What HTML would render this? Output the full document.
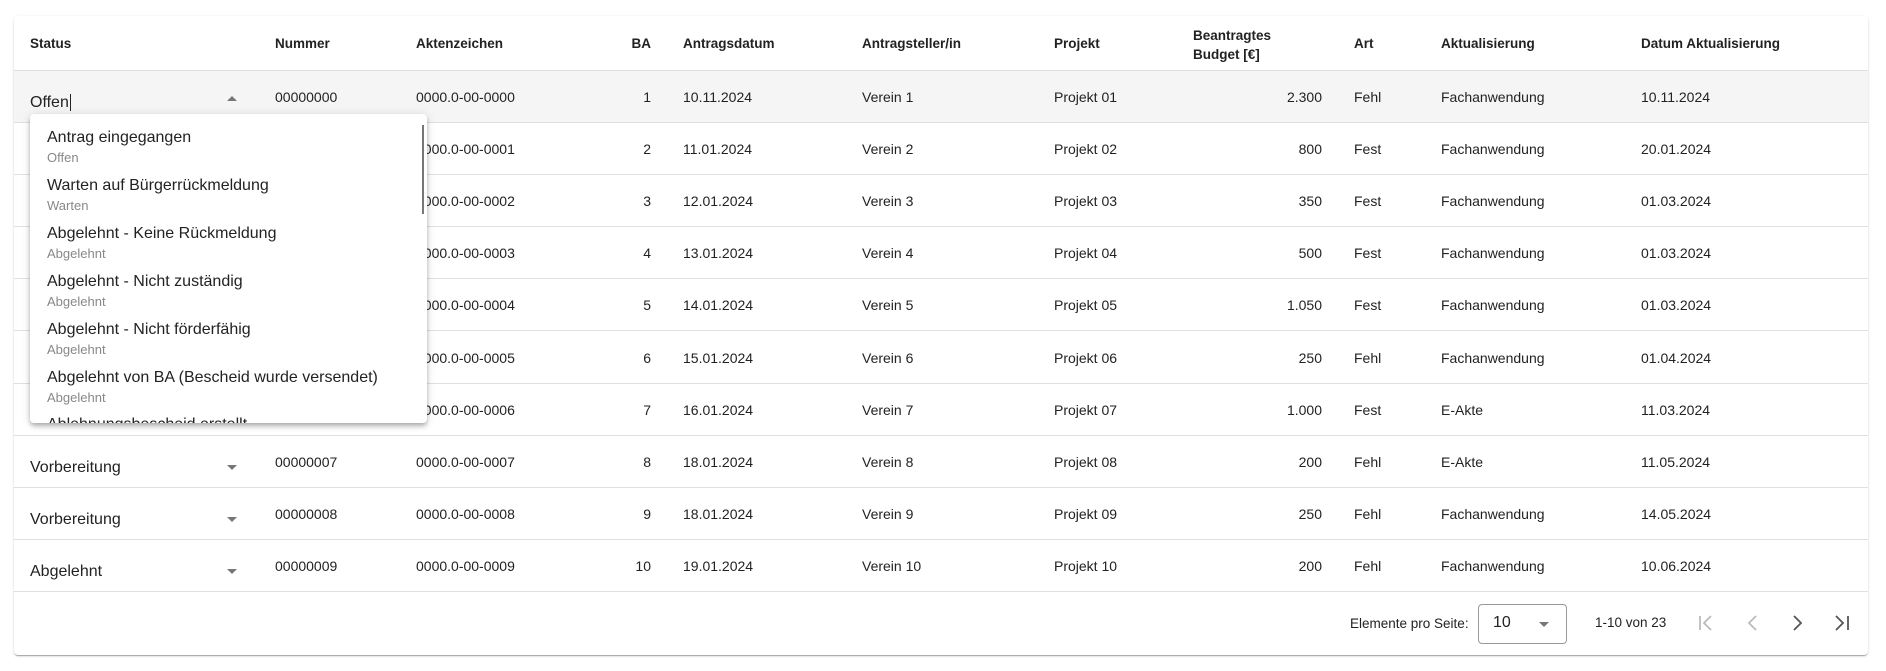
<!DOCTYPE html>
<html><head><meta charset="utf-8"><style>
*{box-sizing:border-box;margin:0;padding:0}
body{width:1886px;height:671px;background:#fff;font-family:"Liberation Sans",Arial,sans-serif;color:#222;position:relative;overflow:hidden}
.card{position:absolute;left:14px;top:16px;width:1854px;height:639px;background:#fff;border-radius:4px;box-shadow:0 2px 1px -1px rgba(0,0,0,.2),0 1px 1px 0 rgba(0,0,0,.14),0 1px 3px 0 rgba(0,0,0,.12)}
.t{position:absolute;font-size:14px;white-space:nowrap}
.h{font-weight:bold;font-size:13.5px}
.row{position:absolute;left:0;width:1854px;height:52px;border-bottom:1px solid #e0e0e0}
.r{text-align:right}
.arrow{position:absolute;width:0;height:0;border-left:5px solid transparent;border-right:5px solid transparent}
.dd{position:absolute;left:30px;top:114px;width:397px;height:309px;background:#fff;border-radius:4px;box-shadow:0 2px 4px -1px rgba(0,0,0,.2),0 4px 5px 0 rgba(0,0,0,.14),0 1px 10px 0 rgba(0,0,0,.12);overflow:hidden;z-index:5}
.op{position:absolute;left:17px;font-size:16px;color:#222;white-space:nowrap}
.sub{position:absolute;left:17px;font-size:13px;color:#888;white-space:nowrap}
</style></head><body>
<div class="card">
<div class="row" style="top:0;height:55px"></div>
<div class="t h" style="left:16px;top:20px">Status</div>
<div class="t h" style="left:261px;top:20px">Nummer</div>
<div class="t h" style="left:402px;top:20px">Aktenzeichen</div>
<div class="t h r" style="left:600px;width:37px;top:20px">BA</div>
<div class="t h" style="left:669px;top:20px">Antragsdatum</div>
<div class="t h" style="left:848px;top:20px">Antragsteller/in</div>
<div class="t h" style="left:1040px;top:20px">Projekt</div>
<div class="t h" style="left:1179px;top:10px;line-height:19px">Beantragtes<br>Budget [€]</div>
<div class="t h" style="left:1340px;top:20px">Art</div>
<div class="t h" style="left:1427px;top:20px">Aktualisierung</div>
<div class="t h" style="left:1627px;top:20px">Datum Aktualisierung</div>
</div>
<div id="rows"></div>
<script>
var d=[["Offen","1","10.11.2024","2.300","Fehl","Fachanwendung","10.11.2024"],
["","2","11.01.2024","800","Fest","Fachanwendung","20.01.2024"],
["","3","12.01.2024","350","Fest","Fachanwendung","01.03.2024"],
["","4","13.01.2024","500","Fest","Fachanwendung","01.03.2024"],
["","5","14.01.2024","1.050","Fest","Fachanwendung","01.03.2024"],
["","6","15.01.2024","250","Fehl","Fachanwendung","01.04.2024"],
["","7","16.01.2024","1.000","Fest","E-Akte","11.03.2024"],
["Vorbereitung","8","18.01.2024","200","Fehl","E-Akte","11.05.2024"],
["Vorbereitung","9","18.01.2024","250","Fehl","Fachanwendung","14.05.2024"],
["Abgelehnt","10","19.01.2024","200","Fehl","Fachanwendung","10.06.2024"]];
var h="";
for(var i=0;i<10;i++){var r=d[i],y=71+i*52.1,ty=y+18;
h+='<div class="row" style="left:14px;width:1854px;top:'+y+'px;'+(i==0?'background:#f5f5f5;':'')+'"></div>';
if(r[0]){h+='<div class="t" style="left:30px;top:'+(ty+5)+'px;font-size:16px">'+r[0]+(i==0?'<span style="border-left:1px solid #222;margin-left:1px"></span>':'')+'</div>';
h+='<div class="arrow" style="left:227px;top:'+(ty+(i==0?7:11))+'px;'+(i==0?'border-bottom:5px solid #777':'border-top:5px solid #777')+'"></div>';}
h+='<div class="t" style="left:275px;top:'+ty+'px">0000000'+i+'</div>';
h+='<div class="t" style="left:416px;top:'+ty+'px">0000.0-00-000'+i+'</div>';
h+='<div class="t r" style="left:600px;width:51px;top:'+ty+'px">'+r[1]+'</div>';
h+='<div class="t" style="left:683px;top:'+ty+'px">'+r[2]+'</div>';
h+='<div class="t" style="left:862px;top:'+ty+'px">Verein '+(i+1)+'</div>';
h+='<div class="t" style="left:1054px;top:'+ty+'px">Projekt '+(i<9?'0':'')+(i+1)+'</div>';
h+='<div class="t r" style="left:1222px;width:100px;top:'+ty+'px">'+r[3]+'</div>';
h+='<div class="t" style="left:1354px;top:'+ty+'px">'+r[4]+'</div>';
h+='<div class="t" style="left:1441px;top:'+ty+'px">'+r[5]+'</div>';
h+='<div class="t" style="left:1641px;top:'+ty+'px">'+r[6]+'</div>';}
document.getElementById("rows").innerHTML=h;
</script>
<div class="dd">
<div style="position:absolute;left:392px;top:11px;width:2px;height:89px;background:#777"></div>
<div class="op" style="top:15px">Antrag eingegangen</div><div class="sub" style="top:36px">Offen</div>
<div class="op" style="top:63px">Warten auf Bürgerrückmeldung</div><div class="sub" style="top:84px">Warten</div>
<div class="op" style="top:111px">Abgelehnt - Keine Rückmeldung</div><div class="sub" style="top:132px">Abgelehnt</div>
<div class="op" style="top:159px">Abgelehnt - Nicht zuständig</div><div class="sub" style="top:180px">Abgelehnt</div>
<div class="op" style="top:207px">Abgelehnt - Nicht förderfähig</div><div class="sub" style="top:228px">Abgelehnt</div>
<div class="op" style="top:255px">Abgelehnt von BA (Bescheid wurde versendet)</div><div class="sub" style="top:276px">Abgelehnt</div>
<div class="op" style="top:302px">Ablehnungsbescheid erstellt</div>
</div>
<div class="t" style="left:1350px;top:616px;font-size:13.5px">Elemente pro Seite:</div>
<div style="position:absolute;left:1478px;top:604px;width:89px;height:40px;border:1px solid #999;border-radius:4px"></div>
<div class="t" style="left:1493px;top:614px;font-size:16px">10</div>
<div class="arrow" style="left:1539px;top:622px;border-top:5px solid #777"></div>
<div class="t" style="left:1595px;top:615px;font-size:13.5px">1-10 von 23</div>
<svg style="position:absolute;left:1696px;top:612px" width="160" height="22" viewBox="0 0 160 22" fill="none" stroke-width="1.8">
<path d="M4 4v14M15 4l-7 7 7 7" stroke="#bbb"/>
<path d="M60 4l-7 7 7 7" stroke="#bbb"/>
<path d="M98 4l7 7-7 7" stroke="#555"/>
<path d="M140 4l7 7-7 7M152 4v14" stroke="#555"/>
</svg>
</body></html>
